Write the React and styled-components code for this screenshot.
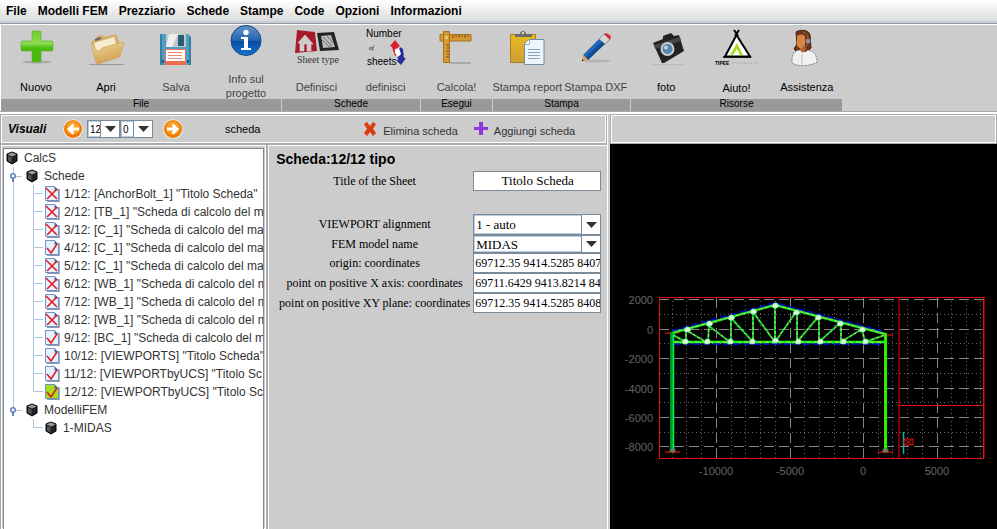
import React, { useState } from 'react';
import styled, { createGlobalStyle } from 'styled-components';

const sheets = [
  { id: 1, label: '1/12: [AnchorBolt_1] "Titolo Scheda"', ok: false },
  { id: 2, label: '2/12: [TB_1] "Scheda di calcolo del m', ok: false },
  { id: 3, label: '3/12: [C_1] "Scheda di calcolo del ma', ok: false },
  { id: 4, label: '4/12: [C_1] "Scheda di calcolo del ma', ok: true },
  { id: 5, label: '5/12: [C_1] "Scheda di calcolo del ma', ok: false },
  { id: 6, label: '6/12: [WB_1] "Scheda di calcolo del m', ok: false },
  { id: 7, label: '7/12: [WB_1] "Scheda di calcolo del m', ok: false },
  { id: 8, label: '8/12: [WB_1] "Scheda di calcolo del m', ok: false },
  { id: 9, label: '9/12: [BC_1] "Scheda di calcolo del m', ok: true },
  { id: 10, label: '10/12: [VIEWPORTS] "Titolo Scheda"', ok: true },
  { id: 11, label: '11/12: [VIEWPORTbyUCS] "Titolo Sc', ok: true },
  { id: 12, label: '12/12: [VIEWPORTbyUCS] "Titolo Sc', ok: true },
];

const menuItems = ['File', 'Modelli FEM', 'Prezziario', 'Schede', 'Stampe', 'Code', 'Opzioni', 'Informazioni'];

// Ribbon icons, all on a 48x44 box
const NewIcon = () => (
  <IconBox viewBox="0 0 48 44">
    <defs>
      <linearGradient id="newFill" x1="0" y1="0" x2="0" y2="1">
        <stop offset="0" stopColor="#6fcf2c" />
        <stop offset="0.4" stopColor="#8edc55" />
        <stop offset="0.55" stopColor="#4dbb0c" />
        <stop offset="1" stopColor="#4cb80f" />
      </linearGradient>
    </defs>
    <ellipse cx="25" cy="37" rx="15" ry="1.5" fill="#999" opacity="0.7" />
    <path d="M21 6h7l1 1v9h11l1 1v8l-1 1H29v10l-1 1h-7l-1-1V26H10l-1-1v-8l1-1h10V7z" fill="url(#newFill)" stroke="#52b01c" strokeWidth="0.6" />
  </IconBox>
);

const OpenIcon = () => (
  <IconBox viewBox="0 0 48 44">
    <defs>
      <linearGradient id="folderFill" x1="0" y1="0" x2="0.4" y2="1">
        <stop offset="0" stopColor="#f0d8a2" />
        <stop offset="1" stopColor="#d3a04e" />
      </linearGradient>
    </defs>
    <path d="M7 39.5h35" stroke="#999" />
    <path d="M9 18l2-3 3-1 1-3 6-1 2 2 9-3 3 1 3 10-24 16z" fill="#d5b06c" />
    <path d="M12 18l20-6 3 9-20 8z" fill="#f8edcf" />
    <path d="M13 15l6-2" stroke="#666" strokeWidth="2" />
    <path d="M9 19l1-1 5 8 4-1 1-2 20-6 2 1-4 13-1 1-21 7-2-1z" fill="url(#folderFill)" stroke="#c99c51" strokeWidth="0.6" />
  </IconBox>
);

const SaveIcon = () => (
  <IconBox viewBox="0 0 48 44">
    <path d="M8 9h28l3 3v28H8z" fill="#4d9fc6" />
    <path d="M8 9h2v31H8zM37 11l2 1v28h-2z" fill="#397f9f" />
    <path d="M14 9h20v13H14z" fill="#c4c7c8" />
    <path d="M17 9h9l-6 13h-6z" fill="#eee" />
    <path d="M26 10h6v11h-6z" fill="#275d75" />
    <path d="M13 24h21v16H13z" fill="#ef6d4e" />
    <path d="M14 25h19v11H14z" fill="#fff" />
    <path d="M16 27.5h14M16 30.5h14M16 33.5h14" stroke="#ec8870" />
    <path d="M10 35h2v3h-2zM35 35h2v3h-2z" fill="#225b75" />
  </IconBox>
);

const InfoIcon = () => (
  <IconBox viewBox="0 0 48 44">
    <defs>
      <linearGradient id="infoFill" x1="0" y1="0" x2="0" y2="1">
        <stop offset="0" stopColor="#6494cc" />
        <stop offset="0.5" stopColor="#2364ae" />
        <stop offset="0.52" stopColor="#084b9e" />
        <stop offset="1" stopColor="#1674d4" />
      </linearGradient>
    </defs>
    <circle cx="24" cy="15.5" r="15" fill="url(#infoFill)" stroke="#124783" />
    <circle cx="24" cy="7.5" r="2.7" fill="#fff" />
    <path d="M19 12h7v11h3v2H19v-2h3v-9h-3z" fill="#fff" />
  </IconBox>
);

const SheetTypeIcon = () => (
  <IconBox viewBox="0 0 48 44">
    <path d="M4 5l18 2 2 19-22 2z" fill="#a51b2a" />
    <path d="M5 18l7-8 8 9h-2v7h-4v-7h-3v7H7v-8z" fill="#ccc" stroke="#e6d3d3" strokeWidth="0.6" />
    <path d="M24 8l17-1 5 18-19 1z" fill="#222" />
    <path d="M28 11l10-1 4 12-12 1z" fill="#b9b9b9" />
    <path d="M30 12l9 9M29 15l8 7M34 11l6 7" stroke="#777" />
    <IconSerif x="4" y="38">Sheet type</IconSerif>
  </IconBox>
);

const SheetCountIcon = () => (
  <IconBox viewBox="0 0 48 44">
    <IconText x="4" y="12">Number</IconText>
    <IconTiny x="7" y="25">of</IconTiny>
    <IconText x="5" y="40">sheets</IconText>
    <path d="M33 15l5 6-2 1 2 6-5 3-3-9-2-1z" fill="#d81e2c" />
    <path d="M38 22l3 2 1 9h2l-5 7-5-5h2l-1-6z" fill="#2b2f93" />
    <path d="M33 24l4-1 2 6-3 3-3-4z" fill="#fff" />
  </IconBox>
);

const CalcIcon = () => (
  <IconBox viewBox="0 0 48 44">
    <path d="M16 38h22" stroke="#aaa" strokeWidth="2" />
    <path d="M7 9.5h31V16H7z" fill="#d59b32" stroke="#a87120" />
    <path d="M10.5 6.5h6v31h-6z" fill="#d59b32" stroke="#a87120" />
    <path d="M20 10v3M23 10v2M26 10v3M29 10v2M32 10v3M35 10v2" stroke="#76501a" />
    <path d="M13 20h3M14 23h2M13 26h3M14 29h2M13 32h3" stroke="#76501a" />
    <circle cx="13.5" cy="12.5" r="1.5" fill="#f1d38b" />
  </IconBox>
);

const ReportIcon = () => (
  <IconBox viewBox="0 0 48 44">
    <defs>
      <linearGradient id="boardFill" x1="0" y1="0" x2="0" y2="1">
        <stop offset="0" stopColor="#e9bb1e" />
        <stop offset="1" stopColor="#cf9e38" />
      </linearGradient>
    </defs>
    <path d="M7.5 9.5h25v28h-25z" fill="url(#boardFill)" stroke="#a97d22" />
    <path d="M12 12V9h5c0-4 6-4 6 0h6v3z" fill="#6b6b6b" />
    <circle cx="20" cy="8" r="1.2" fill="#ddd" />
    <path d="M26 14.5h15v25H21.5V19z" fill="#edf5fb" stroke="#6d8ea8" />
    <path d="M21.5 19.5h5v-5" fill="#fff" stroke="#8ca8bd" />
    <path d="M25 24.5h12M25 27.5h12M25 30.5h12M25 33.5h12" stroke="#8ba6bc" />
  </IconBox>
);

const PencilIcon = () => (
  <IconBox viewBox="0 0 48 44">
    <ellipse cx="25" cy="36" rx="14" ry="1.5" fill="#aaa" opacity="0.7" />
    <path d="M11 30l20-20 6 5-21 20z" fill="#2068b7" />
    <path d="M14 32l20-19 3 2-21 20z" fill="#114a91" />
    <path d="M11 30l5 5-6 1z" fill="#e1a15d" />
    <path d="M10 34v2h2z" fill="#222" />
    <path d="M27 14l5-5 6 5-5 5z" fill="#d5d5d5" stroke="#777" strokeWidth="0.6" />
    <path d="M32 9l2-1 5 3-1 4z" fill="#d62839" />
  </IconBox>
);

const CameraIcon = () => (
  <IconBox viewBox="0 0 48 44">
    <path d="M9 39.5h34" stroke="#bbb" />
    <path d="M11 18l10-4v-3l8-3 3 3 5-1 5 16-20 12h-2z" fill="#222" />
    <path d="M12 20l26-8 1 4-26 8z" fill="#474747" />
    <circle cx="25.5" cy="24" r="7" fill="#ccc" />
    <circle cx="25.5" cy="24" r="5" fill="#5687aa" />
    <circle cx="24" cy="22.5" r="2" fill="#b7d6ec" />
  </IconBox>
);

const TipeeIcon = () => (
  <IconBox viewBox="0 0 48 44">
    <path d="M24.5 10L13 31.5h25z" fill="#fff" stroke="#000" strokeWidth="2" />
    <path d="M22 5l4 6M27 5l-4 6" stroke="#000" strokeWidth="2" />
    <path d="M11 32h28" stroke="#000" strokeWidth="1.5" />
    <path d="M18 30l7-12 6 12h-3l-3-6-4 6z" fill="#aadb1e" />
    <IconLogo x="3" y="40">TIPEE</IconLogo>
    <path d="M20 38h27" stroke="#aaa" strokeDasharray="2 1" />
  </IconBox>
);

const AssistIcon = () => (
  <IconBox viewBox="0 0 48 44">
    <path d="M13 7c5-3 13-2 14 3l1 13-4 4H14l-3-3 3-5z" fill="#743316" stroke="#44210f" />
    <path d="M14 11c3-2 7-2 8 1v8l-3 5-5-4z" fill="#d88643" />
    <path d="M9 35c0-6 3-10 8-10l5 2 3-2c5 1 8 4 9 9v3c-5 4-20 5-25 1z" fill="#f1f1f1" stroke="#666" strokeWidth="0.8" strokeDasharray="2 1" />
    <path d="M17 24l2 4 4-4-1-3z" fill="#b76833" />
    <path d="M19 29v10" stroke="#bbb" />
    <circle cx="25" cy="16" r="2.5" fill="#8e8e8e" />
    <path d="M25 18c0 3-3 4-6 4M25 13c0-3-2-5-5-6" fill="none" stroke="#777" />
  </IconBox>
);

const ribbon = [
  {
    name: 'File',
    width: 280,
    tools: [
      { label: 'Nuovo', icon: NewIcon },
      { label: 'Apri', icon: OpenIcon },
      { label: 'Salva', icon: SaveIcon, muted: true },
      { label: 'Info sul progetto', icon: InfoIcon, muted: true, gap: 3 },
    ],
  },
  {
    name: 'Schede',
    width: 138,
    tools: [
      { label: 'Definisci', icon: SheetTypeIcon, muted: true },
      { label: 'definisci', icon: SheetCountIcon, muted: true },
    ],
  },
  { name: 'Esegui', width: 71, tools: [{ label: 'Calcola!', icon: CalcIcon, muted: true }] },
  {
    name: 'Stampa',
    width: 137,
    tools: [
      { label: 'Stampa report', icon: ReportIcon, muted: true },
      { label: 'Stampa DXF', icon: PencilIcon, muted: true },
    ],
  },
  {
    name: 'Risorse',
    width: 211,
    tools: [
      { label: 'foto', icon: CameraIcon },
      { label: 'Aiuto!', icon: TipeeIcon, gap: 12 },
      { label: 'Assistenza', icon: AssistIcon },
    ],
  },
];

const RoundArrow = ({ flip }) => (
  <svg width="20" height="20" viewBox="0 0 20 20">
    <circle cx="10" cy="10" r="9.8" fill="#f6f0ea" />
    <circle cx="10" cy="10" r="9" fill="#ee7a06" />
    <circle cx="10" cy="9" r="7" fill="#fb9c22" />
    <path
      d={flip ? 'M4 8.5h6L8.500 6l2-1.500L16 10l-5.500 5.500-2-1.500L10 11.500H4z' : 'M16 8.500h-6L11.500 6l-2-1.500L4 10l5.500 5.500 2-1.500-1.500-2.500h6z'}
      fill="#fff"
    />
  </svg>
);

const CubeIcon = () => (
  <svg width="12" height="14" viewBox="0 0 12 14">
    <path d="M6 1l5 2v7l-5 3-5-3V3z" fill="#222" stroke="#000" />
    <path d="M6 1.500l4.500 2L6 5.500l-4.500-2z" fill="#999" />
    <path d="M2 5l3.500 1.500v5L2 9.500z" fill="#555" />
  </svg>
);

const SheetIcon = ({ ok, active }) => (
  <svg width="15" height="16" viewBox="0 0 15 16">
    <path d="M2 15.500h12V3" fill="none" stroke="#8d97a6" strokeWidth="1.500" />
    <path d="M0.500 0.500h9l4 4v10H0.500z" fill={active ? '#a8dc1c' : '#e6f1fb'} stroke="#6f94c8" />
    <path d="M9.500 0.500v4h4z" fill="#4a6ca8" />
    <path d={ok ? 'M2 8l4 5 6-9' : 'M1 2l11 11M12 3L2 13'} fill="none" stroke="#e61320" strokeWidth="1.500" />
  </svg>
);

const Handle = () => (
  <HandleBox width="16" height="18" viewBox="0 0 16 18">
    <path d="M8 9.500h8" stroke="#b0c6de" />
    <path d="M7 9v6" stroke="#5f7fbd" strokeWidth="2" />
    <circle cx="7" cy="9" r="2.200" fill="#fff" stroke="#5f7fbd" strokeWidth="1.500" />
  </HandleBox>
);

const Arrow = () => (
  <svg width="11" height="6" viewBox="0 0 11 6">
    <path d="M0 0h11L5.500 6z" fill="#333" />
  </svg>
);

const Combo = ({ label, id, options, serif, height }) => (
  <ComboBox $height={height}>
    <ComboSelect id={id} aria-label={label} $serif={serif}>
      {options.map((o) => (
        <option key={o}>{o}</option>
      ))}
    </ComboSelect>
    <ComboArrow>
      <Arrow />
    </ComboArrow>
  </ComboBox>
);

const Drawing = () => {
  const majorX = [106, 180, 253, 327];
  const majorY = [155, 185, 214, 244, 273, 302];
  const minorX = [62, 76, 91, 121, 135, 150, 165, 194, 209, 224, 238, 268, 282, 297, 312, 341, 356, 370];
  const minorY = [170, 199, 229, 258, 288];
  // Truss members and the plates where they meet
  const webs = 'M63 191L76 198V186L96 198M99 180l-1 18M99 182l21 16M121 174v24M121 174l22 24M143 168v30M143 168l22 30M165 162v36M165 198l21-30M187 168v30M187 198l21-25M209 173v25M209 198l21-19M231 179v19M231 198l21-13M252 185l3 13 20-7';
  const chord = 'M62 189l103-28 110 29';
  const joints = [[77, 186], [99, 180], [121, 174], [143, 168], [165, 162], [186, 169], [208, 174], [230, 180], [252, 186], [75, 198], [97, 198], [120, 198], [142, 198], [165, 197], [188, 198], [210, 198], [233, 198], [255, 198]];

  return (
    <svg width="387" height="385" viewBox="0 -1 387 385" role="img" aria-label="MIDAS">
      <g transform="translate(0 -1)">
        <g shapeRendering="crispEdges" fill="none">
          <g stroke="#666" strokeDasharray="1 3">
            {minorX.map((x) => <path key={x} d={`M${x}.5 153v161`} />)}
            {minorY.map((y) => <path key={y} d={`M50 ${y}.5h323`} />)}
          </g>
          <g stroke="#858585" strokeDasharray="10 5">
            {majorX.map((x) => <path key={x} d={`M${x}.5 314V153`} />)}
            {majorY.map((y) => <path key={y} d={`M49 ${y}.5h324`} />)}
          </g>
          <path d="M289 153v161" stroke="#800000" strokeWidth="2" />
          <path d="M374.500 153v161" stroke="#800000" />
          <path d="M49.500 153.500h324v161h-324z" stroke="#e01010" />
          <path d="M289 261.500h85" stroke="#e01010" />
          <path d="M55 189h14M275 191h8M55 308h15M268 308h15" stroke="#990000" strokeWidth="2" />
        </g>
        <path d="M62 187l103-28 110 29M63 200h212" fill="none" stroke="#0000d0" strokeWidth="2" strokeDasharray="7 3" />
        <path d={chord} fill="none" stroke="#00f020" strokeWidth="2.500" />
        <path d={chord} fill="none" stroke="#e9bd62" strokeDasharray="4 2" />
        <path d="M63 198h211" stroke="#0f0" strokeWidth="2.500" />
        <path d="M64 198h210" stroke="#d7da60" strokeDasharray="4 3" />
        <path d={webs} fill="none" stroke="#00c030" strokeWidth="2" />
        <path d={webs} fill="none" stroke="#dce35c" strokeDasharray="3 2" />
        <path d="M61.500 188v118" stroke="#009020" strokeWidth="3" />
        <path d="M63.500 188v118M276 191v115" stroke="#0f0" strokeWidth="1.500" />
        <path d="M62.500 190v115" stroke="#00a0b0" strokeDasharray="7 3" />
        <path d="M275.500 189v117" stroke="#0f0" strokeWidth="3" />
        <path d="M275.500 190v115" stroke="#aab800" strokeDasharray="5 3" />
        {joints.map(([x, y]) => (
          <path key={`${x}-${y}`} d={`M${x - 3} ${y}l2-3h3l2 3-2 2h-4z`} fill="#d8ffd8" stroke="#49e06a" strokeWidth="0.700" />
        ))}
        <path d="M60 305h5v3h-5zM273 305h5v3h-5z" fill="#b04fb0" stroke="#0b0" strokeWidth="0.700" />
        <path d="M293.500 288v22" stroke="#00b8b8" strokeWidth="1.500" />
        <path d="M294 295h9v6h-9zM294 295l9 6M303 295l-9 6" fill="none" stroke="#e01010" />
        {['2000', '0', '-2000', '-4000', '-6000', '-8000'].map((t, i) => (
          <AxisText key={t} x="43" y={majorY[i] + 5} textAnchor="end">{t}</AxisText>
        ))}
        {['-10000', '-5000', '0', '5000'].map((t, i) => (
          <AxisText key={t} x={majorX[i]} y="331" textAnchor="middle">{t}</AxisText>
        ))}
      </g>
    </svg>
  );
};

const App = () => {
  const [selected, setSelected] = useState(12);

  return (
    <>
      <GlobalStyle />
      <Page>
        <MenuBar>
          {menuItems.map((item) => (
            <MenuItem key={item} type="button">{item}</MenuItem>
          ))}
        </MenuBar>

        <Ribbon>
          {ribbon.map((group) => (
            <Group key={group.name} $width={group.width}>
              <Tools>
                {group.tools.map(({ label, icon: Icon, muted, gap }) => (
                  <Tool key={label} type="button" $muted={muted} $gap={gap} $wrap={label.startsWith('Info')}>
                    <Icon />
                    <span>{label}</span>
                  </Tool>
                ))}
              </Tools>
              <GroupName>{group.name}</GroupName>
            </Group>
          ))}
        </Ribbon>

        <Body>
          <Workspace>
            <ViewBar>
              <ViewTitle>Visuali</ViewTitle>
              <IconButton type="button" aria-label="Precedente"><RoundArrow /></IconButton>
              <Combos>
                <Combo label="Scheda" options={['12']} height={18} />
                <Combo label="Vista" options={['0']} height={18} />
              </Combos>
              <IconButton type="button" aria-label="Successiva"><RoundArrow flip /></IconButton>
              <ViewName>scheda</ViewName>
              <ViewActions>
                <ActionButton type="button">
                  <svg width="14" height="14" viewBox="0 0 14 14">
                    <path d="M1 2l3-2 3 4 3-4 3 2-3 5 3 4-3 3-3-4-3 4-3-3 3-4z" fill="#dc3a10" />
                  </svg>
                  <span>Elimina scheda</span>
                </ActionButton>
                <ActionButton type="button">
                  <svg width="14" height="14" viewBox="0 0 14 14">
                    <path d="M5 0h4v5h5v3H9v5H5V8H0V5h5z" fill="#9038dc" />
                  </svg>
                  <span>Aggiungi scheda</span>
                </ActionButton>
              </ViewActions>
            </ViewBar>

            <Panels>
              <TreePanel>
                <Tree>
                  <TreeRow><CubeIcon />CalcS</TreeRow>
                  <Branch>
                    <TreeRow><Handle /><CubeIcon />Schede</TreeRow>
                    <Leaves>
                      {sheets.map((s) => (
                        <Leaf key={s.id}>
                          <LeafButton type="button" onClick={() => setSelected(s.id)}>
                            <SheetIcon ok={s.ok} active={s.id === selected} />
                            {s.label}
                          </LeafButton>
                        </Leaf>
                      ))}
                    </Leaves>
                  </Branch>
                  <Branch $last>
                    <TreeRow><Handle /><CubeIcon />ModelliFEM</TreeRow>
                    <Leaves>
                      <Leaf>
                        <LeafButton type="button" $wide><CubeIcon />1-MIDAS</LeafButton>
                      </Leaf>
                    </Leaves>
                  </Branch>
                </Tree>
              </TreePanel>

              <FormPanel>
                <FormTitle>Scheda:12/12 tipo</FormTitle>
                <Field $tall>
                  <label htmlFor="title">Title of the Sheet</label>
                  <TextInput id="title" defaultValue="Titolo Scheda" $center />
                </Field>
                <Field>
                  <label htmlFor="align">VIEWPORT alignment</label>
                  <Combo id="align" options={['1 - auto']} serif height={21} />
                </Field>
                <Field>
                  <label htmlFor="fem">FEM model name</label>
                  <Combo id="fem" options={['MIDAS']} serif height={18} />
                </Field>
                <Field>
                  <label htmlFor="origin">origin: coordinates</label>
                  <TextInput id="origin" defaultValue="69712.35 9414.5285 8407" />
                </Field>
                <Field>
                  <label htmlFor="px">point on positive X axis: coordinates</label>
                  <TextInput id="px" defaultValue="69711.6429 9413.8214 84" />
                </Field>
                <Field>
                  <label htmlFor="pxy">point on positive XY plane: coordinates</label>
                  <TextInput id="pxy" defaultValue="69712.35 9414.5285 8408" />
                </Field>
              </FormPanel>
            </Panels>
          </Workspace>

          <Viewer>
            <ViewerBar />
            <Canvas><Drawing /></Canvas>
          </Viewer>
        </Body>
      </Page>
    </>
  );
};

// Styled Components
const GlobalStyle = createGlobalStyle`
  * {
    box-sizing: border-box;
  }

  body {
    margin: 0;
    background: #ccc;
    font-family: 'Liberation Sans', Arial, sans-serif;
    font-size: 12px;
    color: #000;
  }

  button {
    border: 0;
    padding: 0;
    background: none;
    color: inherit;
    font: inherit;
  }

  svg {
    flex: none;
    display: block;
  }
`;

const Page = styled.div`
  min-height: 100vh;
  display: flex;
  flex-direction: column;
`;

const MenuBar = styled.nav`
  display: flex;
  gap: 11px;
  height: 22px;
  padding: 0 6px;
  background: linear-gradient(#fff, #dcdcdc);
  border-bottom: 1px solid #b8cfe5;
`;

const MenuItem = styled.button`
  font-weight: bold;
  white-space: nowrap;
`;

const Ribbon = styled.div`
  display: flex;
  gap: 1px;
  padding: 1px 0 0 1px;
  border-top: 1px solid #999;
  border-bottom: 1px solid #aaa;
  margin-top: 1px;
  box-shadow: inset 0 1px #fff, inset 1px 0 #fff;
`;

const Group = styled.section`
  flex: none;
  width: ${(p) => p.$width}px;
`;

const Tools = styled.div`
  display: flex;
  height: 74px;
  overflow: hidden;
`;

const Tool = styled.button`
  flex: 1 1 0;
  min-width: 0;
  display: flex;
  flex-direction: column;
  align-items: center;
  gap: ${(p) => p.$gap || 11}px;
  font-size: 11px;
  line-height: 14px;
  white-space: ${(p) => (p.$wrap ? 'normal' : 'nowrap')};
  color: ${(p) => (p.$muted ? '#444' : '#000')};

  span {
    padding: ${(p) => (p.$wrap ? '0 12px' : '0')};
  }
`;

const GroupName = styled.h2`
  margin: 0;
  height: 12px;
  background: #999;
  font-size: 10px;
  font-weight: normal;
  line-height: 10px;
  text-align: center;
`;

const IconBox = styled.svg`
  width: 48px;
  height: 44px;
`;

const IconText = styled.text`
  font: 10px 'Liberation Sans', Arial, sans-serif;
`;

const IconSerif = styled.text`
  font: 10px 'Liberation Serif', serif;
  fill: #333;
`;

const IconTiny = styled.text`
  font: italic 6px 'Liberation Serif', serif;
`;

const IconLogo = styled.text`
  font: bold 5px 'Liberation Sans', Arial, sans-serif;
`;

const Body = styled.main`
  flex: 1;
  display: flex;
  gap: 2px;
  border-top: 2px solid #fff;
`;

const Workspace = styled.div`
  flex: 0 0 61%;
  min-width: 0;
  display: flex;
  flex-direction: column;
  border-right: 1px solid #fff;
`;

const ViewBar = styled.div`
  display: flex;
  align-items: center;
  height: 30px;
  padding: 0 5px;
  border: 1px solid #aaa;
  box-shadow: inset 0 0 0 1px #fff;
`;

const ViewTitle = styled.strong`
  width: 57px;
  padding-left: 2px;
  font-style: italic;
`;

const IconButton = styled.button`
  flex: none;
`;

const Combos = styled.div`
  display: grid;
  grid-template-columns: 33px 33px;
  margin: 0 10px 0 4px;
`;

const ComboBox = styled.div`
  display: grid;
  grid-template-columns: 1fr 19px;
  height: ${(p) => p.$height}px;
  background: #fff;
  border: 1px solid #7a8a99;
`;

const ComboSelect = styled.select`
  grid-area: 1 / 1 / 2 / 3;
  min-width: 0;
  appearance: none;
  margin: 0;
  padding: 0 2px;
  border: 0;
  border-radius: 0;
  background: none;
  color: #000;
  font-family: ${(p) => (p.$serif ? "'Liberation Serif', serif" : "'Liberation Sans', Arial, sans-serif")};
  font-size: ${(p) => (p.$serif ? 13 : 10)}px;
  box-shadow: inset 0 0 0 1px #b8cfe5;
`;

const ComboArrow = styled.span`
  grid-area: 1 / 2 / 2 / 3;
  display: flex;
  align-items: center;
  justify-content: center;
  background: #fff;
  border-left: 1px solid #7a8a99;
  pointer-events: none;
`;

const ViewName = styled.span`
  margin-left: 42px;
  font-size: 11px;
`;

const ViewActions = styled.div`
  display: flex;
  gap: 16px;
  margin-left: auto;
  padding-right: 26px;
`;

const ActionButton = styled.button`
  display: flex;
  align-items: center;
  gap: 6px;
  font-size: 11px;
  color: #333;
  white-space: nowrap;

  span {
    padding-top: 3px;
  }
`;

const Panels = styled.div`
  flex: 1;
  display: flex;
`;

const TreePanel = styled.section`
  flex: 0 0 44%;
  min-width: 0;
  display: flex;
  padding: 3px 2px 0 2px;
  border: 1px solid #aaa;
  border-bottom: 0;
  box-shadow: inset 0 0 0 1px #fff;
`;

const Tree = styled.div`
  flex: 1;
  min-width: 0;
  padding-left: 2px;
  overflow: hidden;
  background: #fff;
  border: 1px solid #7a8a99;
  border-bottom: 0;
  color: #333;
`;

const TreeRow = styled.div`
  display: flex;
  align-items: center;
  height: 18px;
  white-space: nowrap;

  svg {
    margin-right: 6px;
  }
`;

const HandleBox = styled.svg`
  && {
    margin-right: 4px;
  }
`;

const Branch = styled.div`
  background: linear-gradient(#b0c6de, #b0c6de) 7px 0 / 1px ${(p) => (p.$last ? '8px' : '100%')} no-repeat;
`;

const Leaves = styled.ul`
  list-style: none;
  margin: 0;
  padding: 0 0 0 27px;
`;

const Leaf = styled.li`
  display: flex;
  height: 18px;
  background:
    linear-gradient(#b0c6de, #b0c6de) 0 8px / 10px 1px no-repeat,
    linear-gradient(#b0c6de, #b0c6de) 0 0 / 1px 100% no-repeat;

  &:last-child {
    background:
      linear-gradient(#b0c6de, #b0c6de) 0 8px / 10px 1px no-repeat,
      linear-gradient(#b0c6de, #b0c6de) 0 0 / 1px 8px no-repeat;
  }
`;

const LeafButton = styled.button`
  display: flex;
  align-items: center;
  gap: ${(p) => (p.$wide ? 6 : 4)}px;
  padding-left: 12px;
  white-space: nowrap;
`;

const FormPanel = styled.form`
  flex: 1;
  min-width: 0;
  padding: 6px 6px;
  border: 1px solid #aaa;
  border-width: 1px 0 0 1px;
  box-shadow: inset 1px 1px #fff;
`;

const FormTitle = styled.h1`
  margin: 0 0 4px 2px;
  font-size: 14px;
  line-height: 16px;
`;

const Field = styled.div`
  display: grid;
  grid-template-columns: 1fr 128px;
  align-items: center;
  gap: 2px;
  margin-bottom: ${(p) => (p.$tall ? 23 : 0)}px;
  padding-left: 4px;
  font-family: 'Liberation Serif', serif;
  font-size: 12px;
  text-align: center;
  white-space: nowrap;
`;

const TextInput = styled.input`
  width: 100%;
  min-width: 0;
  height: 20px;
  padding: 0 0 0 1px;
  border: 1px solid #7a8a99;
  border-radius: 0;
  background: #fff;
  color: #000;
  font-family: 'Liberation Serif', serif;
  font-size: ${(p) => (p.$center ? 13 : 12)}px;
  text-align: ${(p) => (p.$center ? 'center' : 'left')};
`;

const Viewer = styled.section`
  flex: 1;
  min-width: 0;
  display: flex;
  flex-direction: column;
`;

const ViewerBar = styled.div`
  height: 30px;
  border: 1px solid #aaa;
  box-shadow: inset 0 0 0 1px #fff;
`;

const Canvas = styled.div`
  flex: 1;
  background: #000;
  overflow: hidden;
`;

const AxisText = styled.text`
  font: 11px 'Liberation Sans', Arial, sans-serif;
  fill: #666;
`;

export default App;
